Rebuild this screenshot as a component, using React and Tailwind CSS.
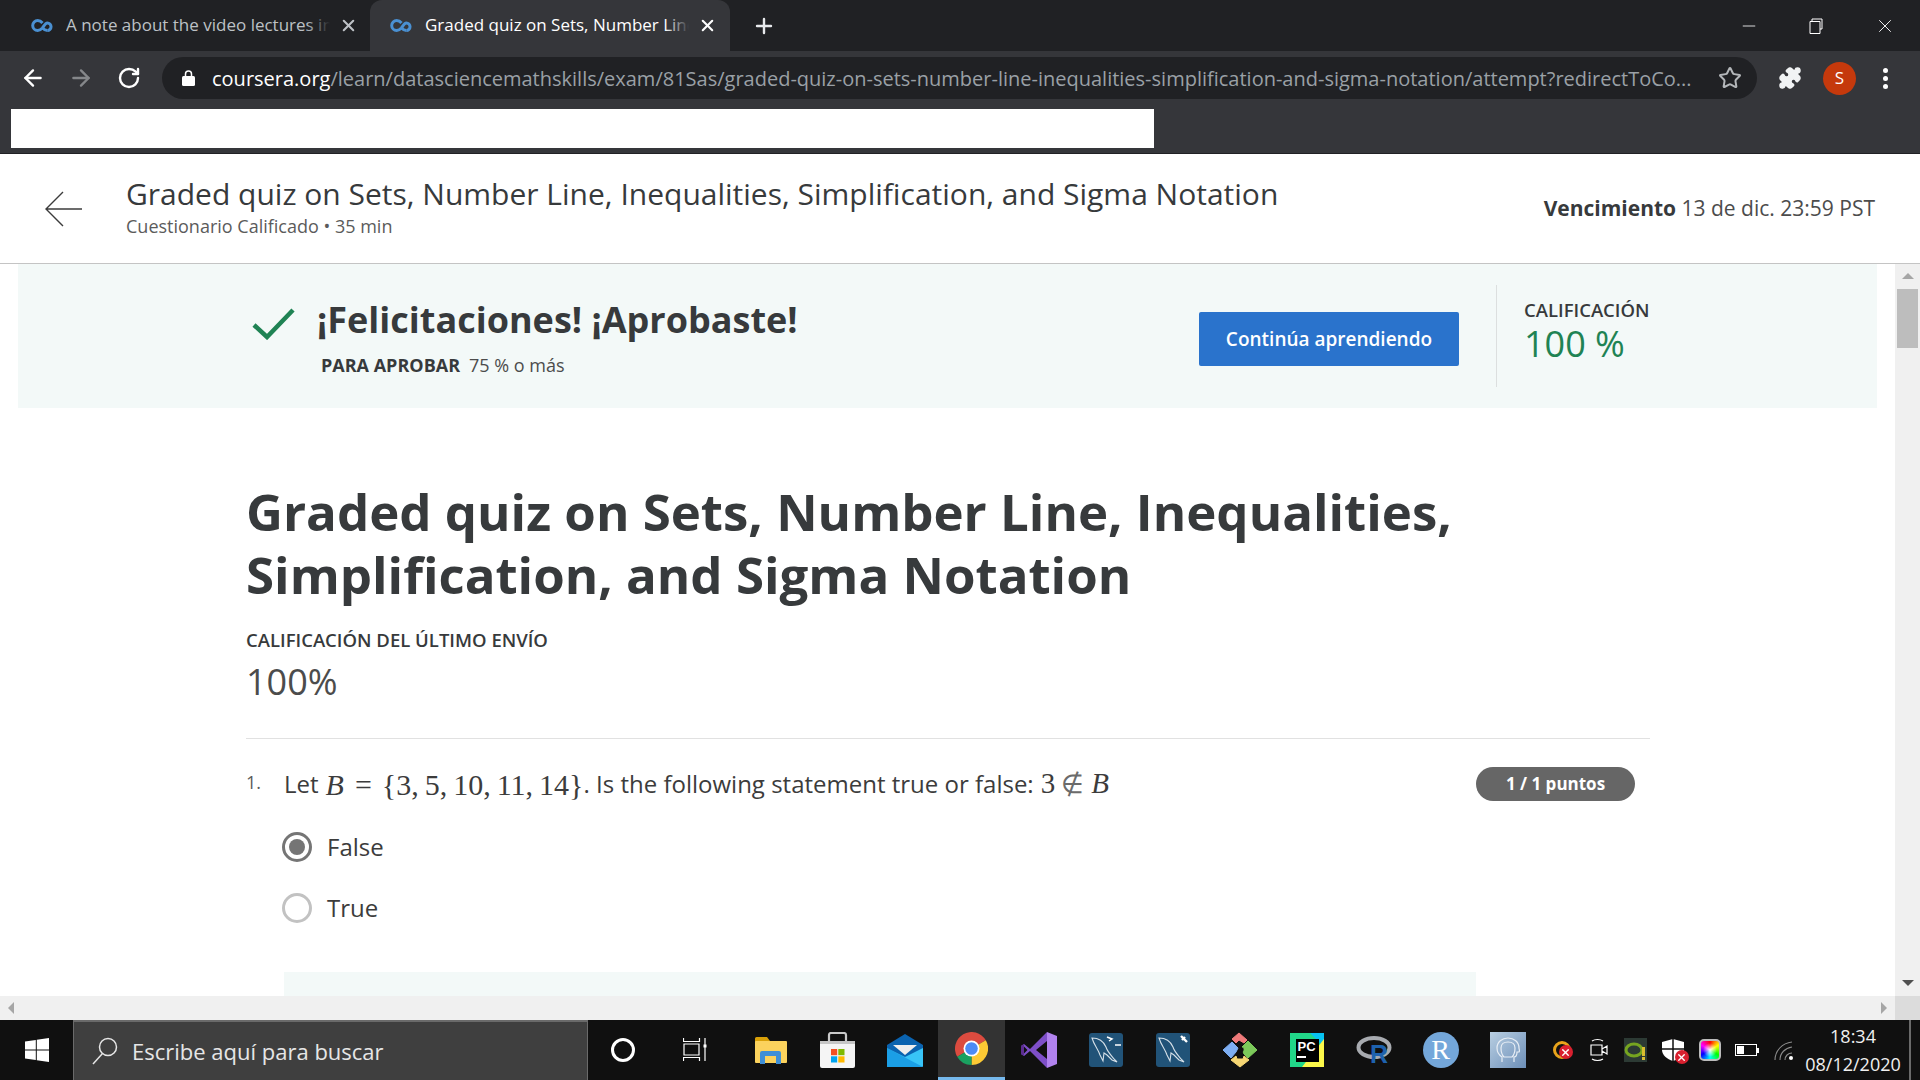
import React from "react";
import { ArrowLeft, ArrowRight, RotateCw, Star, Plus, X, Minus, Puzzle } from "lucide-react";

const OPEN = "font-['Open_Sans',sans-serif]";
const MATH = "font-['Liberation_Serif',serif]";

const Favicon = () => (
  <svg width="23" height="13" viewBox="0 0 23 13" fill="none" stroke="#4a90d2" strokeWidth="3">
    <path d="M11.500 4C10 2.200 8.700 1.500 6.700 1.500a5 5 0 0 0 0 10c2 0 3.300-.8 4.800-2.600 1.500-2.100 2.900-4.900 4.800-4.900a2.600 2.600 0 0 1 0 7.500" />
    <path d="M16.300 11.500c-1.900 0-3.300-.9-4.800-2.500" />
  </svg>
);

const Tab = ({ title, active }) => (
  <div className={`relative flex items-center h-[51px] ${active ? "w-[360px] bg-[#35363a] rounded-t-xl text-white" : "w-[353px] text-[#bdc1c6]"} pl-[20px]`}>
    <Favicon />
    <div className="relative ml-[12px] -mt-[2px] w-[264px] overflow-hidden whitespace-nowrap text-[17px]">
      {title}
      <div className={`absolute right-0 top-0 h-full w-[24px] bg-gradient-to-r from-transparent ${active ? "to-[#35363a]" : "to-[#202124]"}`}></div>
    </div>
    <X className={`ml-[9px] ${active ? "text-white" : "text-[#bdc1c6]"}`} size={19} strokeWidth={2.6} />
  </div>
);

const Radio = ({ checked, label }) => (
  <div className="flex items-center h-[30px]">
    <div className={`w-[30px] h-[30px] rounded-full border-[3px] flex items-center justify-center ${checked ? "border-[#757575]" : "border-[#c2c2c2]"}`}>
      {checked && <div className="w-[16px] h-[16px] rounded-full bg-[#757575]"></div>}
    </div>
    <span className="ml-[15px] text-[24px] text-[#3c3c3c]">{label}</span>
  </div>
);

const Tile = ({ children, className = "w-[67px]" }) => (
  <div className={`h-full flex items-center justify-center ${className}`}>{children}</div>
);

const Tray = ({ children }) => <div className="w-[37px] flex items-center justify-center">{children}</div>;

const WindowsLogo = () => (
  <svg width="24" height="24" viewBox="0 0 24 24" fill="#fff">
    <path d="M0 3.500 10.800 2v9.500H0zM11.800 1.800 24 0v11.500H11.800zM0 12.500h10.800V22L0 20.500zM11.800 12.500H24V24l-12.200-1.800z" />
  </svg>
);

const SearchGlyph = () => (
  <svg width="26" height="28" viewBox="0 0 26 28" fill="none" stroke="#e6e6e6" strokeWidth="1.500">
    <circle cx="16" cy="10" r="8.500" />
    <path d="M10.500 16.500 1 27" />
  </svg>
);

const FolderIcon = () => (
  <svg width="32" height="27" viewBox="0 0 32 27">
    <path d="M0 1.500A1.500 1.500 0 0 1 1.500 0H12l3 4v4H0z" fill="#d9a008" />
    <rect y="4" width="32" height="22" rx="1" fill="#fbd25d" />
    <path d="M5 27V16a2 2 0 0 1 2-2h17a2 2 0 0 1 2 2v11h-5v-8H10v8z" fill="#3f8fd6" />
  </svg>
);

const StoreIcon = () => (
  <svg width="35" height="36" viewBox="0 0 35 36">
    <path d="M9 10V3a2 2 0 0 1 2-2h13a2 2 0 0 1 2 2v7" fill="none" stroke="#c9c9c9" strokeWidth="2.200" />
    <path d="M0 9h35v25a2 2 0 0 1-2 2H2a2 2 0 0 1-2-2z" fill="#f5f5f5" />
    <rect y="9" width="35" height="3" fill="#c6c6c6" />
    <rect x="11" y="17" width="6.200" height="6.200" fill="#f25022" />
    <rect x="18.300" y="17" width="6.200" height="6.200" fill="#7fba00" />
    <rect x="11" y="24.300" width="6.200" height="6.200" fill="#00a4ef" />
    <rect x="18.300" y="24.300" width="6.200" height="6.200" fill="#ffb900" />
  </svg>
);

const MailIcon = () => (
  <svg width="36" height="33" viewBox="0 0 36 33">
    <path d="M0 11h36v21a1 1 0 0 1-1 1H1a1 1 0 0 1-1-1z" fill="#38c4f7" />
    <path d="M0 14 36 33H1a1 1 0 0 1-1-1z" fill="#1b9fe6" />
    <path d="M0 11 18 0l18 11v3L18 23 0 14z" fill="#0a63b0" />
    <path d="M6 11h24L18 21z" fill="#eeeeee" />
  </svg>
);

const ChromeIcon = () => (
  <svg width="33" height="33" viewBox="0 0 33 33">
    <path d="M16.500 16.500 30.800 8.250A16.500 16.500 0 0 0 2.200 24.750Z" fill="#db4b3f" />
    <path d="M16.500 16.500V33A16.500 16.500 0 0 0 30.800 8.250Z" fill="#fcc934" />
    <path d="M16.500 16.500 2.200 24.750A16.500 16.500 0 0 0 16.500 33Z" fill="#1aa160" />
    <circle cx="16.500" cy="16.500" r="8" fill="#fff" />
    <circle cx="16.500" cy="16.500" r="6.300" fill="#4c8bf5" />
  </svg>
);

const VsIcon = () => (
  <svg width="36" height="36" viewBox="0 0 36 36">
    <path d="M26 0 9 17 3 12l-3 2v8l3 2 6-5 17 17V27L15 18 26 9z" fill="#7e4fc8" />
    <path d="M0 14l3-2v12l-3-2z" fill="#5c2d91" />
    <path d="M3 14.500 6.500 18 3 21.500z" fill="#101010" />
    <path d="M26 0 36 4v28l-10 4z" fill="#b182ee" />
  </svg>
);

const MysqlIcon = ({ mark }) => (
  <svg width="34" height="34" viewBox="0 0 34 34">
    <rect width="34" height="34" rx="3" fill="#215378" />
    <path d="M3 5c6 0 11 2 14 9 1 4 4 7 8 12l3 3-5-2-5-5-3-2-1 8-3-6C9 16 5 12 3 5z" fill="none" stroke="#d5e0e8" strokeWidth="1.100" />
    {mark === "dash" ? (
      <path d="M18 4l5 2-3 2M26 12h6" fill="none" stroke="#fff" strokeWidth="1.500" />
    ) : (
      <path d="M25 3l6 6M29 4l-3 3" fill="none" stroke="#fff" strokeWidth="2.400" />
    )}
  </svg>
);

const KrakenIcon = () => (
  <svg width="36" height="36" viewBox="0 0 36 36" strokeLinejoin="round">
    <path d="M10 7 17 1l8 7-3 3-5-3-3 3z" fill="#ef7a7a" stroke="#ef7a7a" />
    <path d="M1 18 10 10l6 6-2 4-5 6z" fill="#7eaef2" stroke="#7eaef2" />
    <path d="M35 18 26 9l-6 6c2 0 3 3 1 5l1 2 4 4z" fill="#7cc95a" stroke="#7cc95a" />
    <path d="M18 35 9 28l5-4 1 3h6l1-3 5 4z" fill="#f7d774" stroke="#f7d774" />
    <path d="M15 22a3 3 0 0 0 6 0l-1-3h-4z" fill="#101010" />
  </svg>
);

const PyCharmIcon = () => (
  <svg width="34" height="34" viewBox="0 0 34 34">
    <path d="M0 0h34v34H0z" fill="#21d789" />
    <path d="M20 0h14v14z" fill="#07c3f2" />
    <path d="M34 6v28H12z" fill="#fcf84a" />
    <rect x="6" y="6" width="23" height="23" fill="#000" />
    <rect x="7" y="23" width="9" height="2" fill="#fff" />
    <text x="7.500" y="18" fill="#fff" fontSize="13" fontWeight="700" fontFamily="Liberation Sans, sans-serif">PC</text>
  </svg>
);

const RLogo = () => (
  <svg width="36" height="28" viewBox="0 0 36 28">
    <ellipse cx="18" cy="11.500" rx="15.500" ry="9.500" fill="none" stroke="#a8abb0" strokeWidth="4" />
    <text x="14" y="27" fill="#1e62ae" fontSize="25" fontWeight="700" fontFamily="Liberation Sans, sans-serif">R</text>
  </svg>
);

const HeadIcon = () => (
  <div className="w-[36px] h-[36px] bg-gradient-to-br from-[#b9cfe2] to-[#6d8fb8] flex items-center justify-center">
    <svg width="24" height="26" viewBox="0 0 24 26" fill="none" stroke="#e8eef5" strokeWidth="1.200">
      <path d="M6 25v-5C3 18 1 15 1 11 1 5 6 1 12 1s11 4 11 10c0 1 1 3 0 4h-2c0 3-1 5-3 5v5M8 20c-2-2-3-5-3-9 0-4 3-6 7-6s7 2 7 6c0 4-1 7-3 9z" />
    </svg>
  </div>
);

const TrayBadge = () => (
  <div className="absolute -right-[5px] -bottom-[3px] w-[14px] h-[14px] rounded-full bg-[#d9202f] flex items-center justify-center">
    <X className="text-white" size={11} strokeWidth={3} />
  </div>
);

const LockGlyph = () => (
  <svg width="13" height="16" viewBox="0 0 13 16" fill="none">
    <path d="M3.500 7V4a3 3 0 0 1 6 0v3" stroke="#fff" strokeWidth="1.500" />
    <rect y="6" width="13" height="10" rx="1.500" fill="#fff" />
  </svg>
);

const App = () => {
  return (
    <div className={`w-[1920px] h-[1080px] flex flex-col overflow-hidden bg-white ${OPEN}`}>
      {/* tab strip */}
      <div className="h-[51px] bg-[#202124] flex items-center shrink-0">
        <div className="w-[11px]"></div>
        <Tab title="A note about the video lectures in this course" />
        <div className="w-[6px]"></div>
        <Tab active title="Graded quiz on Sets, Number Line, Inequalities" />
        <Plus className="ml-[22px] text-[#e8eaed]" size={24} strokeWidth={2.4} />
        <div className="ml-auto flex items-center text-white">
          <Minus size={20} strokeWidth={1} />
          <svg className="ml-[49px]" width="16" height="16" viewBox="0 0 16 16" fill="none" stroke="#fff" strokeWidth="1">
            <path d="M4 3V1h10v10h-2M2 3.500h10v12H2z" />
          </svg>
          <X className="ml-[50px] mr-[24px]" size={22} strokeWidth={1} />
        </div>
      </div>

      {/* toolbar */}
      <div className="h-[58px] pb-[4px] bg-[#35363a] flex items-center shrink-0 text-white">
        <ArrowLeft className="ml-[20px]" size={26} strokeWidth={2.2} />
        <ArrowRight className="ml-[22px] text-[#85878a]" size={26} strokeWidth={2.2} />
        <RotateCw className="ml-[23px]" size={24} strokeWidth={2.4} />
        <div className="ml-[21px] w-[1595px] h-[42px] rounded-full bg-[#202124] flex items-center pl-[20px]">
          <LockGlyph />
          <div className="ml-[17px] mt-[2px] w-[1493px] overflow-hidden whitespace-nowrap text-[20px] text-[#9aa0a6]">
            <span className="text-white">coursera.org</span>/learn/datasciencemathskills/exam/81Sas/graded-quiz-on-sets-number-line-inequalities-simplification-and-sigma-notation/attempt?redirectToCo...
          </div>
          <Star className="ml-[13px] text-[#b4b7ba]" size={24} strokeWidth={2} />
        </div>
        <Puzzle className="ml-[21px] text-[#f1f3f4]" size={24} fill="#f1f3f4" strokeWidth={1.500} />
        <div className="ml-[21px] w-[33px] h-[33px] rounded-full bg-[#c5390c] flex items-center justify-center text-[17px]">S</div>
        <div className="ml-[27px] flex flex-col gap-[3px]">
          <div className="w-[5px] h-[5px] rounded-full bg-white"></div>
          <div className="w-[5px] h-[5px] rounded-full bg-white"></div>
          <div className="w-[5px] h-[5px] rounded-full bg-white"></div>
        </div>
      </div>

      {/* bookmark bar */}
      <div className="h-[45px] bg-[#35363a] border-b border-[#202124] pl-[11px] shrink-0">
        <div className="w-[1143px] h-[39px] bg-white"></div>
      </div>

      {/* coursera header */}
      <div className="h-[110px] shrink-0 flex items-center bg-white border-b border-[#c4c4c4]">
        <svg className="ml-[45px]" width="37" height="36" viewBox="0 0 37 36" fill="none" stroke="#3c3c3c" strokeWidth="1.400">
          <path d="M37 18H1M18 1 1 18l17 17" />
        </svg>
        <div className="ml-[44px] -mt-[6px]">
          <div className="text-[30px] leading-[40px] text-[#373a3c]">
            Graded quiz on Sets, Number Line, Inequalities, Simplification, and Sigma Notation
          </div>
          <div className="text-[18px] leading-[24px] text-[#5b5b5b]">Cuestionario Calificado • 35 min</div>
        </div>
        <div className="ml-auto mr-[45px] text-[21px] text-[#4c4c4c]">
          <span className="font-bold text-[#373a3c]">Vencimiento</span> 13 de dic. 23:59 PST
        </div>
      </div>

      {/* scrolling page */}
      <div className="flex-1 flex min-h-0">
        <div className="flex-1 flex flex-col min-w-0">
          <div className="flex-1 min-h-0 overflow-hidden">
            <div className="mx-[18px] h-[144px] bg-[#f3f9f8] flex items-center">
              <svg className="ml-[234px] mb-[24px]" width="43" height="32" viewBox="0 0 43 32" fill="none" stroke="#1f8354" strokeWidth="4.500">
                <path d="M2 17l13 12L41 2" />
              </svg>
              <div className="ml-[22px] w-[882px] shrink-0">
                <div className="text-[36px] leading-[50px] font-bold text-[#373a3c]">¡Felicitaciones! ¡Aprobaste!</div>
                <div className="ml-[4px] mt-[8px] text-[18px] leading-[24px] text-[#4c4c4c]">
                  <span className="font-bold text-[#373a3c]">PARA APROBAR</span>
                  <span className="ml-[9px]">75 % o más</span>
                </div>
              </div>
              <div className="mt-[6px] w-[260px] h-[54px] rounded-[2px] bg-[#2a73cc] flex items-center justify-center text-white text-[19px] font-semibold">
                Continúa aprendiendo
              </div>
              <div className="ml-[37px] w-px h-[102px] bg-[#dcdfdf]"></div>
              <div className="ml-[27px] -mt-[10px]">
                <div className="mt-[1px] text-[18.500px] leading-[24px] font-semibold text-[#373a3c]">CALIFICACIÓN</div>
                <div className="text-[36px] leading-[44px] text-[#1f8354]">100 %</div>
              </div>
            </div>

            <div className="pl-[246px] w-[1650px]">
              <h1 className="mt-[72px] w-[1300px] text-[51px] leading-[63px] font-bold text-[#373a3c]">
                Graded quiz on Sets, Number Line, Inequalities, Simplification, and Sigma Notation
              </h1>
              <div className="mt-[22px] text-[18.500px] leading-[24px] font-semibold text-[#373a3c]">CALIFICACIÓN DEL ÚLTIMO ENVÍO</div>
              <div className="mt-[6px] text-[36px] leading-[48px] text-[#4c4c4c]">100%</div>
              <div className="mt-[32px] h-px bg-[#e1e1e1]"></div>

              <div className="mt-[28px] flex items-center h-[34px] whitespace-nowrap">
                <span className="w-[38px] text-[18px] text-[#5b5b5b] -mt-[4px]">1.</span>
                <span className="text-[24px] text-[#3c3c3c]">Let</span>
                <span className={`ml-[7px] text-[30px] text-[#3c3c3c] ${MATH}`}>
                  <i>B</i>
                  <span className="ml-[11px] mr-[10px]">=</span>
                  {"{3,\u20095,\u200910,\u200911,\u200914}"}
                </span>
                <span className="text-[24px] text-[#3c3c3c]">. Is the following statement true or false:</span>
                <span className={`ml-[7px] text-[29px] text-[#3c3c3c] ${MATH}`}>3</span>
                <span className={`ml-[6px] text-[26px] text-[#6b6b6b] ${MATH}`}>∉</span>
                <span className={`ml-[7px] text-[29px] text-[#3c3c3c] ${MATH}`}><i>B</i></span>
                <div className="ml-auto mr-[15px] w-[159px] h-[34px] rounded-full bg-[#666666] flex items-center justify-center text-white text-[17px] font-bold">
                  1 / 1 puntos
                </div>
              </div>

              <div className="ml-[36px] mt-[31px] flex flex-col gap-[31px]">
                <Radio checked label="False" />
                <Radio label="True" />
              </div>

              <div className="ml-[38px] mt-[49px] w-[1192px] h-[40px] bg-[#f3f9f8]"></div>
            </div>
          </div>
          {/* horizontal scrollbar */}
          <div className="h-[24px] shrink-0 bg-[#f0f0f0] flex items-center justify-between px-[8px]">
            <div className="w-0 h-0 border-y-[6px] border-y-transparent border-r-[6px] border-r-[#a6a6a6]"></div>
            <div className="w-0 h-0 border-y-[6px] border-y-transparent border-l-[6px] border-l-[#a6a6a6]"></div>
          </div>
        </div>
        {/* vertical scrollbar */}
        <div className="w-[25px] shrink-0 bg-[#f0f0f0] flex flex-col items-center">
          <div className="mt-[9px] w-0 h-0 border-x-[6px] border-x-transparent border-b-[6px] border-b-[#a6a6a6]"></div>
          <div className="mt-[10px] w-[21px] h-[59px] bg-[#bdbdbd]"></div>
          <div className="mt-auto mb-[10px] w-0 h-0 border-x-[6px] border-x-transparent border-t-[6px] border-t-[#505050]"></div>
          <div className="w-full h-[24px] bg-[#dcdcdc]"></div>
        </div>
      </div>

      {/* windows taskbar */}
      <div className="h-[60px] shrink-0 bg-[#101010] flex items-center text-white">
        <div className="w-[73px] flex justify-center"><WindowsLogo /></div>
        <div className="w-[515px] h-full bg-[#3f3f3f] border-t-2 border-x border-[#6a6a6a] flex items-center pl-[18px]">
          <SearchGlyph />
          <span className="ml-[14px] text-[22px] text-[#e6e6e6]">Escribe aquí para buscar</span>
        </div>
        <Tile className="w-[70px]">
          <div className="w-[24px] h-[24px] rounded-full border-[3px] border-white"></div>
        </Tile>
        <Tile className="w-[75px]">
          <svg width="26" height="24" viewBox="0 0 26 24" fill="none" stroke="#fff" strokeWidth="1.200">
            <path d="M.5 0v3.500h16V0M1 6h15v11H1zM.5 23v-3.500h16V23M22 0v23" />
            <rect x="20.500" y="6.500" width="3" height="3" fill="#fff" stroke="none" />
          </svg>
        </Tile>
        <div className="w-[4px]"></div>
        <Tile><FolderIcon /></Tile>
        <Tile><StoreIcon /></Tile>
        <Tile><MailIcon /></Tile>
        <Tile className="w-[67px] bg-[#333333] border-b-[3px] border-[#76b9ed]"><ChromeIcon /></Tile>
        <Tile><VsIcon /></Tile>
        <Tile><MysqlIcon mark="dash" /></Tile>
        <Tile><MysqlIcon mark="wrench" /></Tile>
        <Tile><KrakenIcon /></Tile>
        <Tile><PyCharmIcon /></Tile>
        <Tile><RLogo /></Tile>
        <Tile>
          <div className={`w-[36px] h-[36px] rounded-full bg-[#74a7da] flex items-center justify-center text-white text-[28px] ${MATH}`}>R</div>
        </Tile>
        <Tile><HeadIcon /></Tile>
        <div className="ml-[2px] flex items-center">
          <Tray>
            <div className="relative w-[18px] h-[18px] rounded-full border-[3px] border-[#e8a31b]"><TrayBadge /></div>
          </Tray>
          <Tray>
            <svg width="18" height="24" viewBox="0 0 18 24" fill="none" stroke="#fff" strokeWidth="1.200">
              <path d="M2 3c3-2 8-2 11 0M2 21c3 2 8 2 11 0M1 7h11v10H1zM12 11l5-3v8l-5-3" />
            </svg>
          </Tray>
          <Tray>
            <svg width="23" height="24" viewBox="0 0 23 24">
              <rect width="23" height="24" fill="#2c3a34" />
              <ellipse cx="10" cy="12" rx="8" ry="6" fill="none" stroke="#76a520" strokeWidth="3" />
              <rect x="18" y="9" width="3" height="9" fill="#d9bd30" />
              <rect x="18" y="19" width="3" height="3" fill="#d9bd30" />
            </svg>
          </Tray>
          <Tray>
            <div className="relative">
              <svg width="22" height="22" viewBox="0 0 22 22">
                <path d="M11 0 22 3v8c0 5-5 9-11 11C5 20 0 16 0 11V3z" fill="#fff" />
                <path d="M11 0v22M0 10h22" stroke="#101010" strokeWidth="1.500" />
              </svg>
              <TrayBadge />
            </div>
          </Tray>
          <Tray>
            <div className="w-[22px] h-[22px] rounded-[5px] border-2 border-[#bbbbbb] bg-[radial-gradient(circle,#ffffff_0%,transparent_55%),conic-gradient(#f00,#ff0,#0f0,#0ff,#00f,#f0f,#f00)]"></div>
          </Tray>
          <Tray>
            <div className="flex items-center">
              <div className="w-[22px] h-[12px] border border-white flex p-px">
                <div className="w-[7px] bg-white"></div>
              </div>
              <div className="w-[2px] h-[5px] bg-white"></div>
            </div>
          </Tray>
          <Tray>
            <svg width="20" height="19" viewBox="0 0 20 19" fill="none" stroke="#8d8d8d" strokeWidth="1.100">
              <path d="M1 19C1 10 8 2 18 1M6 19c0-7 5-12 12-13M11 19c0-4 3-7 7-7" />
              <circle cx="17" cy="17" r="2" fill="#fff" stroke="none" />
            </svg>
          </Tray>
        </div>
        <div className="w-[100px] ml-[1px] text-center text-[18px] leading-[28px] text-[#f0f0f0] whitespace-nowrap">
          <div>18:34</div>
          <div>08/12/2020</div>
        </div>
        <div className="ml-[6px] w-[2px] h-full bg-[#6a6a6a]"></div>
      </div>
    </div>
  );
};

export default App;
